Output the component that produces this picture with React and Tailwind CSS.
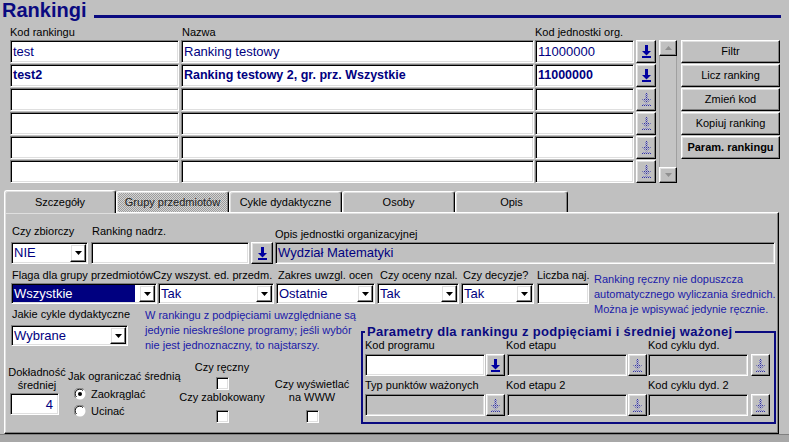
import React, { useId } from 'react';

const sunken =
  'border border-t-[#808080] border-l-[#808080] border-b-white border-r-white shadow-[inset_1px_1px_0_#000,inset_-1px_-1px_0_#dfdfdf]';
const raised =
  'border border-t-white border-l-white border-b-black border-r-black shadow-[inset_-1px_-1px_0_#808080,inset_1px_1px_0_#dfdfdf]';

const LovIcon = ({ off }) => {
  const id = useId();
  return (
    <svg width="9" height="13" viewBox="0 0 9 13">
      <defs>
        <pattern id={id} width="2" height="2" patternUnits="userSpaceOnUse">
          <rect width="1" height="1" fill="#3030a8" />
          <rect x="1" y="1" width="1" height="1" fill="#8080c8" />
        </pattern>
      </defs>
      <g fill={off ? `url(#${id})` : '#0000a0'}>
        <rect x="3" y="0" width="3" height="6" />
        <path d="M0 6h9l-4.5 4.5z" />
        <rect x="0" y="11" width="9" height="2" />
      </g>
    </svg>
  );
};

const Lov = ({ className = '', off }) => (
  <div className={`${raised} ${className} flex items-center justify-center`}>
    <LovIcon off={off} />
  </div>
);

const Field = ({ className = '', children, bold, right }) => (
  <div
    className={`${sunken} ${className} flex items-center overflow-hidden whitespace-nowrap text-[#000080] ${
      right ? 'justify-end pr-[5px]' : 'pl-[2px]'
    } ${bold ? 'font-bold text-[12.5px]' : 'text-[13px]'}`}
  >
    {children}
  </div>
);

const Combo = ({ className = '', value, selected }) => (
  <div className={`${sunken} ${className} bg-white flex p-[1px]`}>
    <div
      className={`flex-1 flex items-center pl-[1px] text-[13px] whitespace-nowrap overflow-hidden ${
        selected ? 'bg-[#000080] text-white mr-[4px]' : 'text-[#000080]'
      }`}
    >
      {value}
    </div>
    <div className={`w-[16px] ${raised} flex items-center justify-center`}>
      <svg width="7" height="4" viewBox="0 0 7 4">
        <path d="M0 0h7L3.5 4z" fill="#000" />
      </svg>
    </div>
  </div>
);

const Btn = ({ children, bold }) => (
  <div className={`${raised} h-[23px] flex items-center justify-center ${bold ? 'font-bold' : ''}`}>
    {children}
  </div>
);

const Check = ({ className = '' }) => (
  <div className={`${sunken} ${className} w-[13px] h-[13px] bg-white`} />
);

const Radio = ({ checked, className = '' }) => (
  <svg width="12" height="12" viewBox="0 0 12 12" className={className}>
    <circle cx="6" cy="6" r="5.5" fill="#fff" />
    <path d="M1.6 9.9A5.5 5.5 0 0 1 9.9 1.6" stroke="#808080" fill="none" />
    <path d="M2.5 9A4.3 4.3 0 0 1 9 2.5" stroke="#000" fill="none" />
    {checked && <circle cx="6" cy="6" r="2" fill="#000" />}
  </svg>
);

const rows = [
  { kod: 'test', nazwa: 'Ranking testowy', jedn: '11000000' },
  { kod: 'test2', nazwa: 'Ranking testowy 2, gr. prz. Wszystkie', jedn: '11000000', bold: true },
  {},
  {},
  {},
  {},
];

const tab =
  'border-t border-l border-r border-t-white border-l-white border-r-black shadow-[inset_-1px_0_0_#808080,inset_1px_1px_0_#dfdfdf] rounded-t-[3px] flex items-center justify-center';

export default function App() {
  return (
    <div className="w-[789px] h-[442px] overflow-hidden bg-[#c0c0c0] font-['Liberation_Sans',Arial,sans-serif] text-[11px] text-black flex flex-col">
      {/* title */}
      <div className="flex h-[24px] shrink-0">
        <div className="pl-[2px] text-[20px] leading-[20px] font-bold text-[#0a0a80]">Rankingi</div>
        <div className="ml-[8px] mt-[15px] h-[3px] w-[687px] bg-[#0a0a80]" />
      </div>

      {/* column labels */}
      <div className="flex h-[16px] leading-[16px] shrink-0 whitespace-nowrap">
        <div className="ml-[10px] w-[172px]">Kod rankingu</div>
        <div className="w-[353px]">Nazwa</div>
        <div>Kod jednostki org.</div>
      </div>

      {/* list of rankings */}
      <div className="flex h-[143px] shrink-0">
        <div className="ml-[10px] flex flex-col gap-[1px]">
          {rows.map((r, i) => (
            <div key={i} className="flex h-[23px]">
              <Field className="w-[169px] bg-white" bold={r.bold}>{r.kod}</Field>
              <Field className="ml-[2px] w-[353px] bg-white" bold={r.bold}>{r.nazwa}</Field>
              <Field className="ml-[1px] w-[99px] bg-white" bold={r.bold}>{r.jedn}</Field>
              <Lov className="ml-[2px] w-[20px]" off={i > 1} />
            </div>
          ))}
        </div>
        <div className="ml-[3px] w-[18px] flex flex-col">
          <div className={`${raised} h-[16px] flex items-center justify-center`}>
            <svg width="7" height="4" viewBox="0 0 7 4">
              <path d="M0 4h7L3.5 0z" fill="#909090" />
            </svg>
          </div>
          <div className="flex-1 bg-[#c4c4c4] border-x border-[#a0a0a0]" />
          <div className={`${raised} h-[16px] flex items-center justify-center`}>
            <svg width="7" height="4" viewBox="0 0 7 4">
              <path d="M0 0h7L3.5 4z" fill="#909090" />
            </svg>
          </div>
        </div>
        <div className="ml-[4px] w-[99px] flex flex-col gap-[1px]">
          <Btn>Filtr</Btn>
          <Btn>Licz ranking</Btn>
          <Btn>Zmień kod</Btn>
          <Btn>Kopiuj ranking</Btn>
          <Btn bold>Param. rankingu</Btn>
        </div>
      </div>

      {/* tabs */}
      <div className="flex items-end h-[29px] ml-[4px] shrink-0">
        <div className={`${tab} relative z-10 -mb-[1px] w-[112px] h-[23px] bg-[#c0c0c0]`}>Szczegóły</div>
        <div className={`${tab} w-[113px] h-[21px] text-[#202020] bg-[repeating-conic-gradient(#9c9c9c_0_25%,#d4d4d4_0_50%)] bg-[length:2px_2px]`}>
          Grupy przedmiotów
        </div>
        <div className={`${tab} w-[113px] h-[21px]`}>Cykle dydaktyczne</div>
        <div className={`${tab} w-[113px] h-[21px]`}>Osoby</div>
        <div className={`${tab} w-[113px] h-[21px]`}>Opis</div>
      </div>

      {/* tab panel */}
      <div className="ml-[4px] w-[775px] h-[222px] shrink-0 border border-t-white border-l-white border-r-black border-b-black shadow-[inset_-1px_-1px_0_#808080,inset_1px_1px_0_#dfdfdf] flex flex-col">
        {/* row A */}
        <div className="flex mt-[8px] h-[21px] leading-[21px] whitespace-nowrap">
          <div className="ml-[7px] w-[80px]">Czy zbiorczy</div>
          <div className="w-[183px]">Ranking nadrz.</div>
          <div className="leading-[26px]">Opis jednostki organizacyjnej</div>
        </div>
        <div className="flex h-[22px]">
          <Combo className="ml-[6px] w-[77px]" value="NIE" />
          <Field className="ml-[3px] w-[158px] bg-white" />
          <Lov className="ml-[2px] w-[22px]" />
          <Field className="ml-[2px] w-[500px] bg-[#c0c0c0]">Wydział Matematyki</Field>
        </div>

        {/* row B */}
        <div className="flex h-[40px]">
          <div className="flex flex-col">
            <div className="flex h-[19px] leading-[22px] whitespace-nowrap">
              <div className="ml-[7px] w-[141px]">Flaga dla grupy przedmiotów</div>
              <div className="w-[125px]">Czy wszyst. ed. przedm.</div>
              <div className="w-[102px]">Zakres uwzgl. ocen</div>
              <div className="w-[83px]">Czy oceny nzal.</div>
              <div className="w-[74px]">Czy decyzje?</div>
              <div className="w-[52px]">Liczba naj.</div>
            </div>
            <div className="flex h-[21px]">
              <Combo className="ml-[6px] w-[146px]" value="Wszystkie" selected />
              <Combo className="ml-[1px] w-[116px]" value="Tak" />
              <Combo className="ml-[2px] w-[99px]" value="Ostatnie" />
              <Combo className="ml-[2px] w-[82px]" value="Tak" />
              <Combo className="ml-[2px] w-[73px]" value="Tak" />
              <Field className="ml-[3px] w-[52px] bg-white" />
            </div>
          </div>
          <div className="ml-[5px] h-[40px] pt-[8px] leading-[15px] text-[#1a1aa8] whitespace-nowrap">
            <div>Ranking ręczny nie dopuszcza</div>
            <div>automatycznego wyliczania średnich.</div>
            <div>Można je wpisywać jedynie ręcznie.</div>
          </div>
        </div>

        {/* row C */}
        <div className="flex">
          <div className="w-[356px] flex flex-col">
            <div className="flex h-[49px]">
              <div className="ml-[6px] w-[117px] flex flex-col">
                <div className="h-[21px] leading-[21px] pl-[1px] whitespace-nowrap">Jakie cykle dydaktyczne</div>
                <Combo className="w-[117px] h-[21px]" value="Wybrane" />
              </div>
              <div className="ml-[17px] pt-[4px] leading-[15px] text-[#1a1aa8] whitespace-nowrap">
                <div>W rankingu z podpięciami uwzględniane są</div>
                <div>jedynie nieskreślone programy; jeśli wybór</div>
                <div>nie jest jednoznaczny, to najstarszy.</div>
              </div>
            </div>

            <div className="flex items-start whitespace-nowrap">
              <div className="ml-[5px] w-[54px] mt-[13px] flex flex-col items-center leading-[13px]">
                <div>Dokładność</div>
                <div>średniej</div>
                <Field className="self-start mt-[1px] w-[49px] h-[22px] bg-white" right>4</Field>
              </div>
              <div className="ml-[4px] w-[110px] mt-[17px] flex flex-col">
                <div className="leading-[13px]">Jak ograniczać średnią</div>
                <div className="mt-[3px] h-[16px] flex items-center">
                  <Radio checked className="ml-[6px]" />
                  <span className="ml-[5px]">Zaokrąglać</span>
                </div>
                <div className="mt-[1px] h-[16px] flex items-center">
                  <Radio className="ml-[6px]" />
                  <span className="ml-[5px]">Ucinać</span>
                </div>
              </div>
              <div className="w-[88px] mt-[8px] flex flex-col items-center leading-[13px]">
                <div>Czy ręczny</div>
                <Check className="mt-[3px]" />
                <div className="mt-[1px]">Czy zablokowany</div>
                <Check className="mt-[6px]" />
              </div>
              <div className="ml-[6px] w-[80px] mt-[25px] flex flex-col items-center leading-[13px]">
                <div>Czy wyświetlać</div>
                <div>na WWW</div>
                <Check className="mt-[6px]" />
              </div>
            </div>
          </div>

          <fieldset className="mt-[22px] w-[415px] min-w-0 border-2 border-[#0a0a80] px-[2px] pb-[6px]">
            <legend className="pl-[2px] pr-[3px] text-[13px] leading-[12px] tracking-[0.3px] font-bold text-[#0a0a80] whitespace-nowrap">
              Parametry dla rankingu z podpięciami i średniej ważonej
            </legend>
            <div className="mt-[2px] flex h-[11px] leading-[11px] whitespace-nowrap">
              <div className="w-[141px]">Kod programu</div>
              <div className="w-[142px]">Kod etapu</div>
              <div>Kod cyklu dyd.</div>
            </div>
            <div className="mt-[3px] flex h-[22px]">
              <Field className="w-[120px] bg-white" />
              <Lov className="ml-[1px] w-[19px]" />
              <Field className="ml-[2px] w-[120px] bg-[#c0c0c0]" />
              <Lov className="ml-[1px] w-[19px]" off />
              <Field className="ml-[1px] w-[100px] bg-[#c0c0c0]" />
              <Lov className="ml-[3px] w-[19px]" off />
            </div>
            <div className="flex h-[18px] leading-[19px] whitespace-nowrap">
              <div className="w-[141px]">Typ punktów ważonych</div>
              <div className="w-[142px]">Kod etapu 2</div>
              <div>Kod cyklu dyd. 2</div>
            </div>
            <div className="flex h-[22px]">
              <Field className="w-[120px] bg-[#c0c0c0]" />
              <Lov className="ml-[1px] w-[19px]" off />
              <Field className="ml-[2px] w-[120px] bg-[#c0c0c0]" />
              <Lov className="ml-[1px] w-[19px]" off />
              <Field className="ml-[1px] w-[100px] bg-[#c0c0c0]" />
              <Lov className="ml-[3px] w-[19px]" off />
            </div>
          </fieldset>
        </div>
      </div>

      <div className="flex-1 border-t border-[#808080] bg-[#a8a8a8]" />
    </div>
  );
}
